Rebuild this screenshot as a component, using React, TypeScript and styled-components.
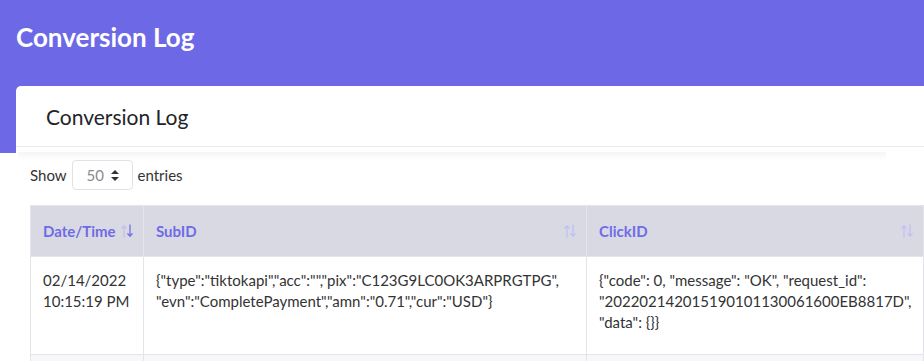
import React from "react";
import styled, { createGlobalStyle } from "styled-components";

const GlobalStyle = createGlobalStyle`
  html, body {
    margin: 0;
    padding: 0;
    overflow: hidden;
    background: #fff;
  }
  body {
    font-family: Lato, "Open Sans", sans-serif;
    color: #333;
  }
`;

const Hero = styled.div`
  background: #6d69e6;
  height: 86px;
  padding: 22px 16px 0;
  box-sizing: border-box;
`;
const HeroTitle = styled.h1`
  margin: 0;
  color: #fff;
  font-size: 26px;
  font-weight: 700;
  line-height: 30px;
`;
const CardWrap = styled.div`
  padding-left: 16px;
  background: linear-gradient(#6d69e6 67px, #fff 67px);
`;
const Card = styled.div`
  background: #fff;
  border-radius: 5px 0 0 0;
  width: 1200px;
`;
const CardHeader = styled.div`
  height: 60px;
  display: flex;
  align-items: center;
  padding-left: 30px;
  font-size: 21px;
  color: #212529;
  border-bottom: 1px solid #e8e8ee;
`;
const Shade = styled.div`
  margin: 5px 0 0 2px;
  width: 868px;
  height: 8px;
  background: linear-gradient(#f5f5f6, #fff);
`;
const Controls = styled.div`
  display: flex;
  align-items: center;
  gap: 5px;
  padding-left: 14px;
  height: 30px;
  font-size: 15px;
  color: #333;
`;
const SelectBox = styled.div`
  width: 61px;
  height: 30px;
  box-sizing: border-box;
  border: 1px solid #e2e2e6;
  border-radius: 4px;
  display: flex;
  align-items: center;
  justify-content: space-between;
  padding: 0 13px 0 14px;
  color: #8a8a90;
  font-size: 15px;
`;
const TableWrap = styled.div`
  margin: 15px 0 0 14px;
`;
const Table = styled.table`
  border-collapse: collapse;
  table-layout: fixed;
  font-size: 15px;
  line-height: 21px;
`;
const Th = styled.th<{ $w: number }>`
  width: ${(p) => p.$w}px;
  height: 51px;
  box-sizing: border-box;
  background: #d9d9e3;
  border: 1px solid #e4e4ea;
  padding: 0 10px 0 12px;
  text-align: left;
  color: #6f6be8;
  font-weight: 700;
`;
const ThInner = styled.div`
  display: flex;
  align-items: center;
  justify-content: space-between;
`;
const Td = styled.td<{ $alt?: boolean }>`
  vertical-align: top;
  border: 1px solid #e4e4ea;
  border-top: none;
  padding: 13px 12px;
  height: 71px;
  background: ${(p) => (p.$alt ? "#f7f7f9" : "#fff")};
  color: #333;
`;

function SortIcon({ active }: { active?: boolean }) {
  return (
    <svg width="12" height="14" viewBox="0 0 12 14">
      <g fill="none" strokeWidth="1.3" strokeLinecap="round">
        <path d="M3 13V2M0.8 4.2L3 1.8L5.2 4.2" stroke="#c3c1f0" />
        <path d="M9 1V12M6.8 9.8L9 12.2L11.2 9.8" stroke={active ? "#7471e6" : "#c3c1f0"} />
      </g>
    </svg>
  );
}

function SelectArrows() {
  return (
    <svg width="8" height="11" viewBox="0 0 8 11">
      <path d="M4 0L8 4H0Z M4 11L0 7H8Z" fill="#333" />
    </svg>
  );
}

const columns = [
  { title: "Date/Time", w: 113, active: true },
  { title: "SubID", w: 443 },
  { title: "ClickID", w: 329 },
  { title: "", w: 200 },
];

export default function App() {
  return (
    <>
      <GlobalStyle />
      <Hero>
        <HeroTitle>Conversion Log</HeroTitle>
      </Hero>
      <CardWrap>
        <Card>
          <CardHeader>Conversion Log</CardHeader>
          <Shade />
          <Controls>
            <span>Show</span>
            <SelectBox>
              <span>50</span>
              <SelectArrows />
            </SelectBox>
            <span>entries</span>
          </Controls>
          <TableWrap>
            <Table>
              <thead>
                <tr>
                  {columns.map((c, i) => (
                    <Th key={i} $w={c.w}>
                      {c.title && (
                        <ThInner>
                          <span>{c.title}</span>
                          <SortIcon active={c.active} />
                        </ThInner>
                      )}
                    </Th>
                  ))}
                </tr>
              </thead>
              <tbody>
                <tr>
                  <Td>02/14/2022 10:15:19 PM</Td>
                  <Td>
                    {'{"type":"tiktokapi","acc":"","pix":"C123G9LC0OK3ARPRGTPG",'}
                    <br />
                    {'"evn":"CompletePayment","amn":"0.71","cur":"USD"}'}
                  </Td>
                  <Td>
                    {'{"code": 0, "message": "OK", "request_id": "202202142015190101130061600EB8817D", "data": {}}'}
                  </Td>
                  <Td />
                </tr>
                <tr>
                  <Td $alt />
                  <Td $alt />
                  <Td $alt />
                  <Td $alt />
                </tr>
              </tbody>
            </Table>
          </TableWrap>
        </Card>
      </CardWrap>
    </>
  );
}
